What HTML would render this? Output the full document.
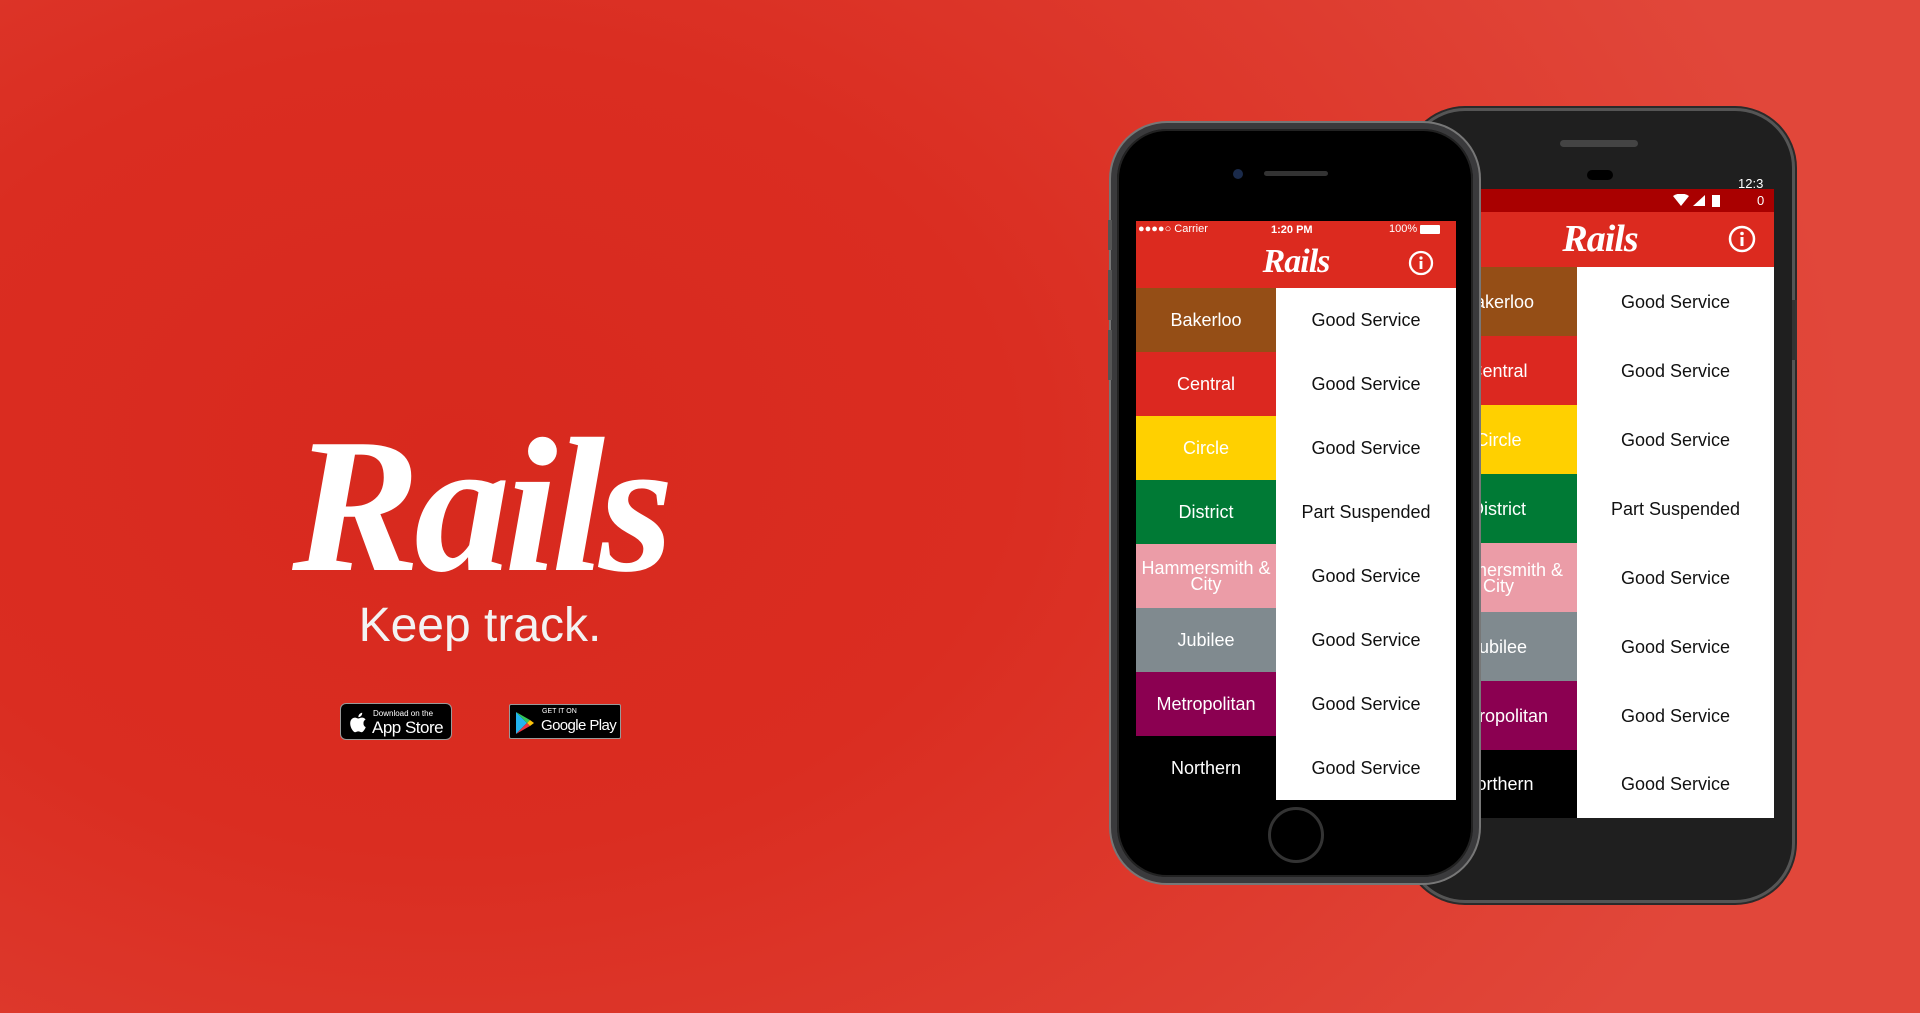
<!DOCTYPE html>
<html><head><meta charset="utf-8"><style>
*{margin:0;padding:0;box-sizing:border-box}
body{width:1920px;height:1013px;overflow:hidden;position:relative;font-family:"Liberation Sans",sans-serif;
background:radial-gradient(ellipse 1400px 1000px at 450px 450px,#d8291e 0%,#da2d21 40%,#e1473a 100%)}
.abs{position:absolute;white-space:nowrap}
.logo{left:280px;top:410px;width:400px;text-align:center;font-family:"Liberation Serif",serif;font-style:italic;font-weight:bold;font-size:192px;color:#fff;letter-spacing:-6px;line-height:1}
.tag{left:300px;top:598px;width:360px;text-align:center;font-size:48px;color:#f3f3f3}
.badge{background:#000;border:1px solid #999;border-radius:6px;color:#fff}
.row{position:absolute;left:0;right:0;display:flex}
.row div{display:flex;align-items:center;justify-content:center;text-align:center;font-size:18px;line-height:16px}
.c{color:#fff}
.s{background:#fff;color:#111}
</style></head><body>
<div class="abs logo">Rails</div>
<div class="abs tag">Keep track.</div>
<div class="abs badge" style="left:340px;top:703px;width:112px;height:37px">
 <svg class="abs" style="left:8px;top:8px" width="18" height="21" viewBox="0 0 18 21"><path fill="#fff" d="M14.5 11c0-2.5 2-3.4 2.1-3.5-1.2-1.7-3-1.9-3.600-1.900-1.500-.200-3 .900-3.700.900-.800 0-2-.900-3.200-.900C4.400 5.600 2.900 6.600 2 8c-1.700 3-.400 7.400 1.200 9.800.800 1.200 1.800 2.500 3 2.400 1.200 0 1.700-.800 3.100-.800s1.900.800 3.200.800c1.300 0 2.100-1.200 2.900-2.400.900-1.300 1.300-2.600 1.300-2.700 0 0-2.500-1-2.200-4.100zM12.200 3.700c.700-.800 1.100-1.900 1-3-1 0-2.100.700-2.800 1.500-.600.700-1.200 1.800-1 2.900 1.100.100 2.100-.600 2.800-1.400z"/></svg>
 <div class="abs" style="left:32px;top:5px;font-size:8px">Download on the</div>
 <div class="abs" style="left:31px;top:14px;font-size:17px;letter-spacing:-.5px">App Store</div>
</div>
<div class="abs badge" style="left:509px;top:704px;width:112px;height:35px;border-radius:2px">
 <svg class="abs" style="left:4px;top:6px" width="22" height="24" viewBox="0 0 22 24"><path d="M2 1l11 11L2 23z" fill="#22b4f0"/><path d="M2 1l14 8-3 3z" fill="#34c759"/><path d="M2 23l14-8-3-3z" fill="#ea3340"/><path d="M16 9l4 3-4 3-3-3z" fill="#fcc30b"/></svg>
 <div class="abs" style="left:32px;top:3px;font-size:7px">GET IT ON</div>
 <div class="abs" style="left:31px;top:12px;font-size:15px;letter-spacing:-.6px">Google Play</div>
</div>

<!-- Android -->
<div class="abs" style="left:1405px;top:108px;width:390px;height:795px;background:#1f1f1f;border:3px solid #555;border-radius:60px;box-shadow:0 0 0 2px #2a2a2a"></div>
<div class="abs" style="left:1560px;top:140px;width:78px;height:7px;background:#444;border-radius:4px"></div>
<div class="abs" style="left:1587px;top:170px;width:26px;height:10px;background:#000;border-radius:5px"></div>
<div class="abs" style="left:1792px;top:300px;width:5px;height:60px;background:#333"></div>
<div class="abs" style="left:1738px;top:176px;color:#fff;font-size:13px">12:3</div>
<div class="abs" style="left:1420px;top:189px;width:354px;height:629px;background:#000;overflow:hidden">
 <div class="abs" style="left:0;top:0;width:354px;height:23px;background:#a90000"></div>
 <div class="abs" style="left:337px;top:4px;color:#fff;font-size:13px">0</div>
 <svg class="abs" style="left:253px;top:5px" width="55" height="14"><path d="M0 2 Q8 -3 16 2 L8 12z" fill="#fff"/><path d="M20 12 L32 1 L32 12z" fill="#fff"/><rect x="39" y="1" width="8" height="12" fill="#fff"/></svg>
 <div class="abs" style="left:0;top:23px;width:354px;height:55px;background:#dc2a1f"></div>
 <div class="abs" style="left:130px;top:28px;width:100px;text-align:center;font-family:'Liberation Serif',serif;font-style:italic;font-weight:bold;color:#fff;font-size:38px;letter-spacing:-1px">Rails</div>
 <svg class="abs" style="left:308px;top:36px" width="28" height="28"><circle cx="14" cy="14" r="12" fill="none" stroke="#fff" stroke-width="2.5"/><circle cx="14" cy="8.5" r="1.8" fill="#fff"/><rect x="12.5" y="12" width="3" height="9" fill="#fff"/></svg>
 <div class="abs" style="left:0;top:78px;width:354px;height:551px">
  <div class="row" style="top:0;height:69px"><div class="c" style="width:157px;background:#954e16">Bakerloo</div><div class="s" style="flex:1">Good Service</div></div>
  <div class="row" style="top:69px;height:69px"><div class="c" style="width:157px;background:#dc2820">Central</div><div class="s" style="flex:1">Good Service</div></div>
  <div class="row" style="top:138px;height:69px"><div class="c" style="width:157px;background:#ffd000">Circle</div><div class="s" style="flex:1">Good Service</div></div>
  <div class="row" style="top:207px;height:69px"><div class="c" style="width:157px;background:#007a35">District</div><div class="s" style="flex:1">Part Suspended</div></div>
  <div class="row" style="top:276px;height:69px"><div class="c" style="width:157px;background:#eb9ca7">Hammersmith &amp;<br>City</div><div class="s" style="flex:1">Good Service</div></div>
  <div class="row" style="top:345px;height:69px"><div class="c" style="width:157px;background:#808a8f">Jubilee</div><div class="s" style="flex:1">Good Service</div></div>
  <div class="row" style="top:414px;height:69px"><div class="c" style="width:157px;background:#8b0051">Metropolitan</div><div class="s" style="flex:1">Good Service</div></div>
  <div class="row" style="top:483px;height:68px"><div class="c" style="width:157px;background:#000">Northern</div><div class="s" style="flex:1">Good Service</div></div>
 </div>
</div>

<!-- iPhone -->
<div class="abs" style="left:1111px;top:123px;width:368px;height:760px;background:#000;border:6px solid #3a3a3c;border-radius:56px;box-shadow:0 0 0 2px #777,inset 0 0 0 2px #222"></div>
<div class="abs" style="left:1108px;top:220px;width:4px;height:30px;background:#555"></div>
<div class="abs" style="left:1108px;top:270px;width:4px;height:50px;background:#555"></div>
<div class="abs" style="left:1108px;top:330px;width:4px;height:50px;background:#555"></div>
<div class="abs" style="left:1264px;top:171px;width:64px;height:5px;background:#333;border-radius:3px"></div>
<div class="abs" style="left:1233px;top:169px;width:10px;height:10px;background:#1a2a4a;border-radius:50%"></div>
<div class="abs" style="left:1268px;top:807px;width:56px;height:56px;border:3px solid #333;border-radius:50%"></div>
<div class="abs" style="left:1136px;top:221px;width:320px;height:579px;background:#000;overflow:hidden">
 <div class="abs" style="left:0;top:0;width:320px;height:67px;background:#dc2a1f"></div>
 <div class="abs" style="left:2px;top:2px;color:#fff;font-size:11px">●●●●○ Carrier</div>
 <div class="abs" style="left:135px;top:3px;color:#fff;font-size:11px;font-weight:bold">1:20 PM</div>
 <div class="abs" style="left:253px;top:2px;color:#fff;font-size:11px">100%</div>
 <div class="abs" style="left:284px;top:4px;width:20px;height:9px;background:#fff;border-radius:1px"></div>
 <div class="abs" style="left:110px;top:22px;width:100px;text-align:center;font-family:'Liberation Serif',serif;font-style:italic;font-weight:bold;color:#fff;font-size:34px;letter-spacing:-1px">Rails</div>
 <svg class="abs" style="left:272px;top:29px" width="26" height="26"><circle cx="13" cy="13" r="11" fill="none" stroke="#fff" stroke-width="2.3"/><circle cx="13" cy="8" r="1.6" fill="#fff"/><rect x="11.6" y="11" width="2.8" height="8" fill="#fff"/></svg>
 <div class="abs" style="left:0;top:67px;width:320px;height:512px">
  <div class="row" style="top:0;height:64px"><div class="c" style="width:140px;background:#954e16">Bakerloo</div><div class="s" style="flex:1">Good Service</div></div>
  <div class="row" style="top:64px;height:64px"><div class="c" style="width:140px;background:#dc2820">Central</div><div class="s" style="flex:1">Good Service</div></div>
  <div class="row" style="top:128px;height:64px"><div class="c" style="width:140px;background:#ffd000">Circle</div><div class="s" style="flex:1">Good Service</div></div>
  <div class="row" style="top:192px;height:64px"><div class="c" style="width:140px;background:#007a35">District</div><div class="s" style="flex:1">Part Suspended</div></div>
  <div class="row" style="top:256px;height:64px"><div class="c" style="width:140px;background:#eb9ca7">Hammersmith &amp;<br>City</div><div class="s" style="flex:1">Good Service</div></div>
  <div class="row" style="top:320px;height:64px"><div class="c" style="width:140px;background:#808a8f">Jubilee</div><div class="s" style="flex:1">Good Service</div></div>
  <div class="row" style="top:384px;height:64px"><div class="c" style="width:140px;background:#8b0051">Metropolitan</div><div class="s" style="flex:1">Good Service</div></div>
  <div class="row" style="top:448px;height:64px"><div class="c" style="width:140px;background:#000">Northern</div><div class="s" style="flex:1">Good Service</div></div>
 </div>
</div>
</body></html>
